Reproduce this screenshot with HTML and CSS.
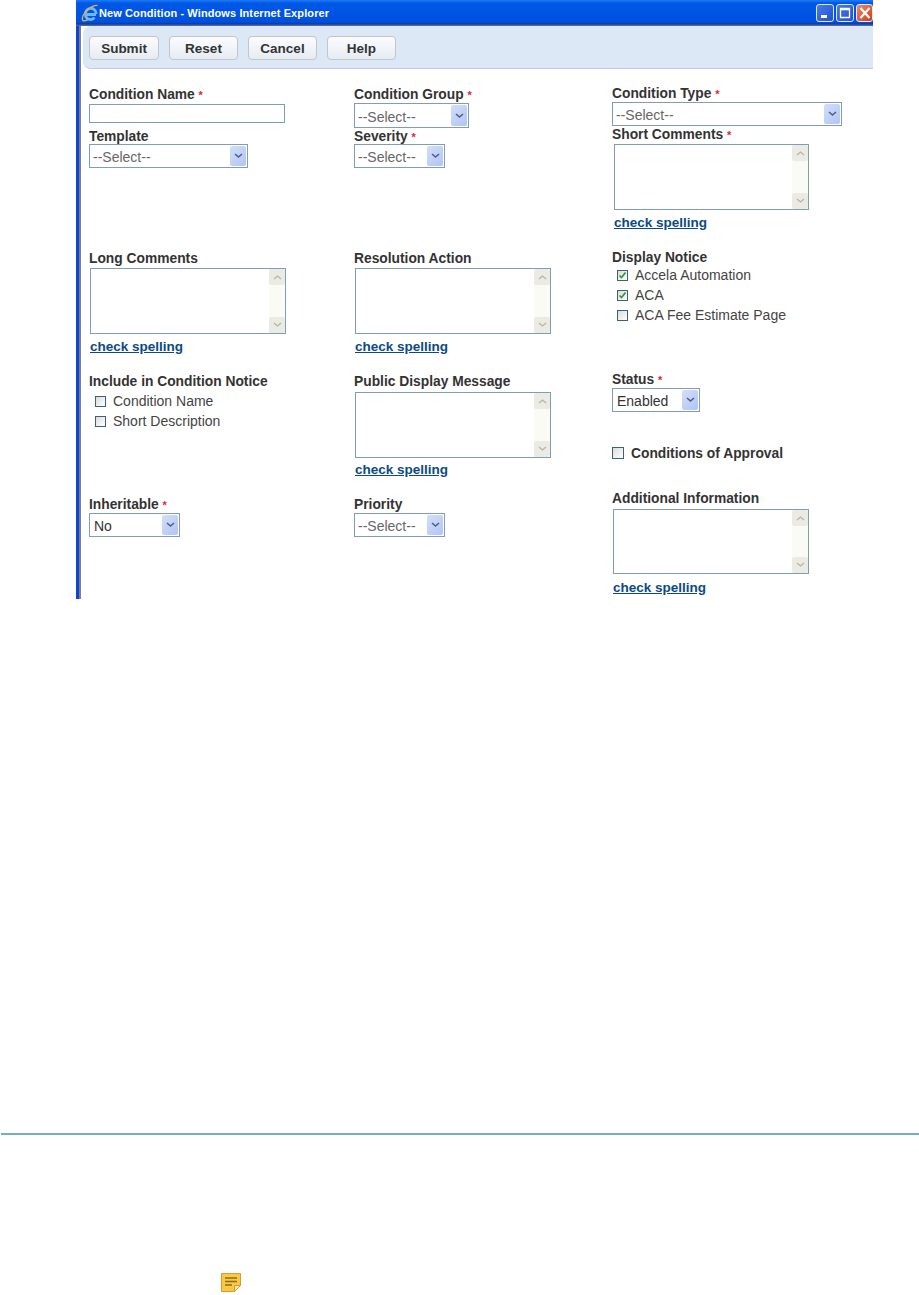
FILE: index.html
```html
<!DOCTYPE html>
<html lang="en">
<head>
    <meta charset="UTF-8">
    <title>New Condition - Windows Internet Explorer</title>
    <link rel="stylesheet" href="styles.css">
</head>
<body>
    <div class="window">
        <div class="titlebar">
            <svg class="ie-logo" width="18" height="18" viewBox="0 0 18 18">
                <path d="M4.500 10.500H15M4.500 10.500A5.300 5.300 0 1 1 15 10M4.500 10.500A5 5 0 0 0 13.500 13.500" fill="none" stroke="#6db8f0" stroke-width="2.800"/>
                <path d="M16.500 1.500C10 1 .5 10 1.500 16C2 17.500 5 16.800 7 15.500" fill="none" stroke="#e2b04a" stroke-width="1.300"/>
            </svg>
            <span class="title-text">New Condition - Windows Internet Explorer</span>
            <div class="win-btns">
                <span class="win-btn"><svg width="14" height="14" viewBox="0 0 14 14"><rect x="3" y="9" width="6" height="3" fill="#fff"/></svg></span>
                <span class="win-btn"><svg width="14" height="14" viewBox="0 0 14 14"><path d="M2.500 2.500h9v9h-9zM2.500 3.500h9" fill="none" stroke="#fff" stroke-width="1.300"/></svg></span>
                <span class="win-btn win-close"><svg width="14" height="14" viewBox="0 0 14 14"><path d="M2.500 2l9 10M11.500 2l-9 10" fill="none" stroke="#fff" stroke-width="2.200"/></svg></span>
            </div>
        </div>

        <div class="window-body">
            <div class="toolbar">
                <button class="tool-btn btn-submit">Submit</button>
                <button class="tool-btn btn-reset">Reset</button>
                <button class="tool-btn btn-cancel">Cancel</button>
                <button class="tool-btn btn-help">Help</button>
            </div>

            <div class="form">
                <!-- left column -->
                <div class="col col-left">
                    <div class="field f-name">
                        <label class="lbl">Condition Name <em>*</em></label>
                        <input type="text" class="text-input">
                    </div>
                    <div class="field f-template">
                        <label class="lbl">Template</label>
                        <div class="select w-template"><span>--Select--</span><i class="drop"><svg width="9" height="6" viewBox="0 0 9 6"><path d="M1 1l3.500 3L8 1" fill="none" stroke="#4d6185" stroke-width="1.600"/></svg></i></div>
                    </div>
                    <div class="field f-long">
                        <label class="lbl">Long Comments</label>
                        <div class="memo memo-indent">
                            <div class="memo-text"></div>
                            <div class="scroll"><b><svg width="9" height="6" viewBox="0 0 9 6"><path d="M1 5l3.500-3L8 5" fill="none" stroke="#b5b5a8" stroke-width="1.300"/></svg></b><b><svg width="9" height="6" viewBox="0 0 9 6"><path d="M1 1l3.500 3L8 1" fill="none" stroke="#b5b5a8" stroke-width="1.300"/></svg></b></div>
                        </div>
                        <a class="spell spell-indent" href="#">check spelling</a>
                    </div>
                    <div class="field f-include">
                        <label class="lbl">Include in Condition Notice</label>
                        <label class="check-row"><span class="box"></span>Condition Name</label>
                        <label class="check-row"><span class="box"></span>Short Description</label>
                    </div>
                    <div class="field f-inherit">
                        <label class="lbl">Inheritable <em>*</em></label>
                        <div class="select w-small"><span class="dark">No</span><i class="drop"><svg width="9" height="6" viewBox="0 0 9 6"><path d="M1 1l3.500 3L8 1" fill="none" stroke="#4d6185" stroke-width="1.600"/></svg></i></div>
                    </div>
                </div>

                <!-- middle column -->
                <div class="col col-mid">
                    <div class="field f-group">
                        <label class="lbl">Condition Group <em>*</em></label>
                        <div class="select w-group"><span>--Select--</span><i class="drop"><svg width="9" height="6" viewBox="0 0 9 6"><path d="M1 1l3.500 3L8 1" fill="none" stroke="#4d6185" stroke-width="1.600"/></svg></i></div>
                    </div>
                    <div class="field f-severity">
                        <label class="lbl">Severity <em>*</em></label>
                        <div class="select w-small"><span>--Select--</span><i class="drop"><svg width="9" height="6" viewBox="0 0 9 6"><path d="M1 1l3.500 3L8 1" fill="none" stroke="#4d6185" stroke-width="1.600"/></svg></i></div>
                    </div>
                    <div class="field f-resolution">
                        <label class="lbl">Resolution Action</label>
                        <div class="memo memo-indent">
                            <div class="memo-text"></div>
                            <div class="scroll"><b><svg width="9" height="6" viewBox="0 0 9 6"><path d="M1 5l3.500-3L8 5" fill="none" stroke="#b5b5a8" stroke-width="1.300"/></svg></b><b><svg width="9" height="6" viewBox="0 0 9 6"><path d="M1 1l3.500 3L8 1" fill="none" stroke="#b5b5a8" stroke-width="1.300"/></svg></b></div>
                        </div>
                        <a class="spell spell-indent" href="#">check spelling</a>
                    </div>
                    <div class="field f-public">
                        <label class="lbl">Public Display Message</label>
                        <div class="memo memo-indent">
                            <div class="memo-text"></div>
                            <div class="scroll"><b><svg width="9" height="6" viewBox="0 0 9 6"><path d="M1 5l3.500-3L8 5" fill="none" stroke="#b5b5a8" stroke-width="1.300"/></svg></b><b><svg width="9" height="6" viewBox="0 0 9 6"><path d="M1 1l3.500 3L8 1" fill="none" stroke="#b5b5a8" stroke-width="1.300"/></svg></b></div>
                        </div>
                        <a class="spell spell-indent" href="#">check spelling</a>
                    </div>
                    <div class="field f-priority">
                        <label class="lbl">Priority</label>
                        <div class="select w-small"><span>--Select--</span><i class="drop"><svg width="9" height="6" viewBox="0 0 9 6"><path d="M1 1l3.500 3L8 1" fill="none" stroke="#4d6185" stroke-width="1.600"/></svg></i></div>
                    </div>
                </div>

                <!-- right column -->
                <div class="col col-right">
                    <div class="field f-type">
                        <label class="lbl">Condition Type <em>*</em></label>
                        <div class="select w-type"><span>--Select--</span><i class="drop"><svg width="9" height="6" viewBox="0 0 9 6"><path d="M1 1l3.500 3L8 1" fill="none" stroke="#4d6185" stroke-width="1.600"/></svg></i></div>
                    </div>
                    <div class="field f-short">
                        <label class="lbl">Short Comments <em>*</em></label>
                        <div class="memo memo-indent2">
                            <div class="memo-text"></div>
                            <div class="scroll"><b><svg width="9" height="6" viewBox="0 0 9 6"><path d="M1 5l3.500-3L8 5" fill="none" stroke="#b5b5a8" stroke-width="1.300"/></svg></b><b><svg width="9" height="6" viewBox="0 0 9 6"><path d="M1 1l3.500 3L8 1" fill="none" stroke="#b5b5a8" stroke-width="1.300"/></svg></b></div>
                        </div>
                        <a class="spell memo-indent2" href="#">check spelling</a>
                    </div>
                    <div class="field f-display">
                        <label class="lbl">Display Notice</label>
                        <label class="check-row"><span class="box"><svg width="9" height="9" viewBox="0 0 9 9"><path d="M1.500 4.500l2 2 4-5" fill="none" stroke="#2a9a34" stroke-width="1.700"/></svg></span>Accela Automation</label>
                        <label class="check-row"><span class="box"><svg width="9" height="9" viewBox="0 0 9 9"><path d="M1.500 4.500l2 2 4-5" fill="none" stroke="#2a9a34" stroke-width="1.700"/></svg></span>ACA</label>
                        <label class="check-row"><span class="box"></span>ACA Fee Estimate Page</label>
                    </div>
                    <div class="field f-status">
                        <label class="lbl">Status <em>*</em></label>
                        <div class="select w-status"><span class="dark">Enabled</span><i class="drop"><svg width="9" height="6" viewBox="0 0 9 6"><path d="M1 1l3.500 3L8 1" fill="none" stroke="#4d6185" stroke-width="1.600"/></svg></i></div>
                    </div>
                    <label class="approval"><span class="box"></span>Conditions of Approval</label>
                    <div class="field f-additional">
                        <label class="lbl">Additional Information</label>
                        <div class="memo memo-indent">
                            <div class="memo-text"></div>
                            <div class="scroll"><b><svg width="9" height="6" viewBox="0 0 9 6"><path d="M1 5l3.500-3L8 5" fill="none" stroke="#b5b5a8" stroke-width="1.300"/></svg></b><b><svg width="9" height="6" viewBox="0 0 9 6"><path d="M1 1l3.500 3L8 1" fill="none" stroke="#b5b5a8" stroke-width="1.300"/></svg></b></div>
                        </div>
                        <a class="spell spell-indent" href="#">check spelling</a>
                    </div>
                </div>
            </div>
        </div>
    </div>

    <hr class="rule">

    <div class="note">
        <svg width="22" height="21" viewBox="0 0 22 21">
            <path d="M1.500 1.500h19v12l-6 6h-13z" fill="#fbc93f" stroke="#d59a3c"/>
            <path d="M5 6h12M5 9.500h12M5 13h7" stroke="#8a6a2c" stroke-width="1.300"/>
            <path d="M14.500 19.500v-6h6z" fill="#fdeab0" stroke="#d59a3c"/>
        </svg>
    </div>
</body>
</html>
```

FILE: styles.css
```css
body {
    margin: 0;
    background-color: #fff;
    font-family: "Liberation Sans", Arial, sans-serif;
    font-size: 14px;
    color: #333;
}

.window {
    width: 797px;
    height: 599px;
    margin-left: 76px;
    overflow: hidden;
}

/* title bar */
.titlebar {
    display: flex;
    align-items: center;
    box-sizing: border-box;
    height: 26px;
    padding: 0 0 1px 5px;
    background: linear-gradient(#1f7cf2, #0058e6 12%, #0050e0 85%, #0a3ca8 92%, #6a7690);
    color: #fff;
}

.ie-logo {
    margin-right: 0;
}

.title-text {
    font-size: 11px;
    font-weight: bold;
    letter-spacing: 0.1px;
}

.win-btns {
    display: flex;
    gap: 2px;
    margin-left: auto;
}

.win-btn {
    display: flex;
    align-items: center;
    justify-content: center;
    box-sizing: border-box;
    width: 18px;
    height: 18px;
    border: 1px solid #dfe8fa;
    border-radius: 3px;
    background: linear-gradient(135deg, #4a7ce8, #1f4fd0);
}

.win-close {
    width: 17px;
    background: linear-gradient(135deg, #ec8a62, #cf3f1c);
}

/* body of the popup */
.window-body {
    box-sizing: border-box;
    height: 573px;
    padding-left: 4px;
    border-left: 3px solid #0a46dc;
    background: linear-gradient(to right, #808080 0, #808080 2px, #fff 2px);
}

.toolbar {
    display: flex;
    align-items: center;
    gap: 10px;
    box-sizing: border-box;
    height: 43px;
    padding: 2px 0 0 6px;
    background-color: #dce8f5;
    border-bottom: 1px solid #bccfe2;
    border-radius: 8px 0 0 8px;
}

.tool-btn {
    height: 24px;
    padding: 0;
    border: 1px solid #c5c5c5;
    border-radius: 4px;
    background: linear-gradient(#fbfcfe, #e6ecf4);
    font-family: inherit;
    font-size: 13.500px;
    font-weight: bold;
    color: #333;
}

.btn-submit { width: 70px; }
.btn-reset { width: 69px; }
.btn-cancel { width: 69px; }
.btn-help { width: 69px; }

/* form columns */
.form {
    display: flex;
    padding-left: 6px;
}

.col {
    display: flex;
    flex-direction: column;
}

.col-left { width: 265px; }
.col-mid { width: 258px; }
.col-right { width: 255px; }

.field {
    display: flex;
    flex-direction: column;
    align-items: flex-start;
}

.lbl {
    padding-top: 1px;
    margin-bottom: -1px;
    font-size: 13.800px;
    font-weight: bold;
    line-height: 16px;
    color: #333;
}

.lbl em {
    font-style: normal;
    font-size: 11px;
    color: #e8222a;
}

.text-input {
    width: 196px;
    height: 19px;
    padding: 0;
    margin-top: 2px;
    box-sizing: border-box;
    border: 1px solid #7f9db9;
}

.select {
    display: flex;
    align-items: center;
    justify-content: space-between;
    box-sizing: border-box;
    height: 24px;
    margin-top: 1px;
    padding: 1px 1px 1px 3px;
    border: 1px solid #7f9db9;
    font-size: 14px;
    color: #666;
}

.select span {
    padding-top: 2px;
}

.select .dark {
    margin-left: 1px;
    color: #333;
}

.drop {
    display: flex;
    align-items: center;
    justify-content: center;
    width: 16px;
    height: 100%;
    border-radius: 2px;
    background: linear-gradient(135deg, #d3defa, #b0c4f4);
}

.w-template { width: 159px; margin-top: 0; }
.w-group { width: 115px; height: 25px; }
.w-small { width: 91px; }
.w-type { width: 230px; }
.w-status { width: 88px; }

.memo {
    display: flex;
    box-sizing: border-box;
    width: 196px;
    height: 66px;
    margin-top: 2px;
    border: 1px solid #7f9db9;
}

.memo-text {
    flex: 1;
}

.scroll {
    display: flex;
    flex-direction: column;
    justify-content: space-between;
    width: 16px;
    background-color: #fbfbf6;
}

.scroll b {
    display: flex;
    align-items: center;
    justify-content: center;
    height: 16px;
    border-radius: 2px;
    background-color: #ecebe3;
}

.memo-indent { margin-left: 1px; }
.memo-indent2 { margin-left: 2px; width: 195px; }

.spell {
    margin-top: 5px;
    font-size: 13.500px;
    font-weight: bold;
    line-height: 16px;
    color: #0b4a85;
}

.spell-indent { margin-left: 1px; }
.spell.memo-indent2 { width: auto; }

.check-row {
    display: flex;
    align-items: center;
    height: 20px;
    padding-left: 5px;
    font-size: 14px;
    color: #444;
}

.box {
    display: flex;
    align-items: center;
    justify-content: center;
    box-sizing: border-box;
    width: 11px;
    height: 11px;
    margin-right: 7px;
    border: 1px solid #3f5f7f;
    background: linear-gradient(135deg, #dcdcd6, #fff);
}

.approval {
    display: flex;
    align-items: center;
    height: 16px;
    margin-top: 33px;
    font-size: 13.800px;
    font-weight: bold;
    color: #333;
}

.approval .box {
    width: 12px;
    height: 12px;
    margin-right: 7px;
}

/* vertical spacing per field */
.f-name { margin-top: 17px; }
.f-template { margin-top: 5px; }
.f-long { margin-top: 82px; }
.f-include { margin-top: 18px; }
.f-include .check-row { padding-left: 6px; }
.f-include .lbl { margin-bottom: 1px; }
.f-inherit { margin-top: 65px; }

.f-group { margin-top: 17px; }
.f-severity .select { margin-top: 0; }
.f-resolution { margin-top: 82px; }
.f-public { margin-top: 18px; }
.f-public .memo { margin-top: 3px; }
.f-public .spell { margin-top: 4px; }
.f-priority { margin-top: 18px; }

.f-type { margin-top: 16px; }
.f-display { margin-top: 18px; }
.f-status { margin-top: 46px; }
.f-additional { margin-top: 29px; }
.f-additional .memo { height: 65px; margin-top: 3px; }
.f-additional .spell { margin-top: 6px; }

/* bottom of the page */
.rule {
    height: 2px;
    margin: 534px 0 0 1px;
    border: 0;
    background-color: #74adc3;
}

.note {
    margin: 137px 0 0 220px;
    line-height: 0;
}
```
